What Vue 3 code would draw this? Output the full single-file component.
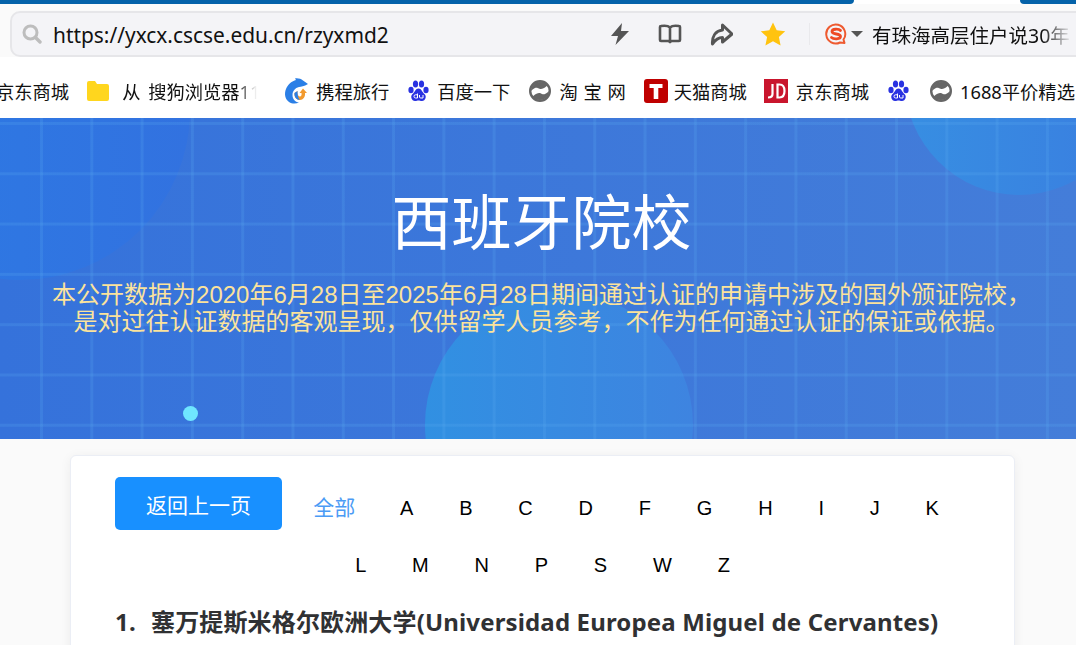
<script setup>
const bookmarks = [
  { icon: 'none', text: '京东商城', cls: 'first' },
  { icon: 'folder', text: '从 搜狗浏览器11', cls: 'fade' },
  { icon: 'ctrip', text: '携程旅行' },
  { icon: 'paw', text: '百度一下' },
  { icon: 'globe', text: '淘 宝 网', cls: 'spaced' },
  { icon: 'tmall', text: '天猫商城', cls: 'tight' },
  { icon: 'jd', text: '京东商城' },
  { icon: 'paw', text: '', cls: 'lone' },
  { icon: 'globe', text: '1688平价精选' },
]

const letters = ['A', 'B', 'C', 'D', 'F', 'G', 'H', 'I', 'J', 'K', 'L', 'M', 'N', 'P', 'S', 'W', 'Z']
</script>

<template>
  <div class="page">
    <!-- 顶部标签条 -->
    <div class="tabstrip">
      <div class="strip-left"></div>
      <div class="strip-gap"></div>
      <div class="strip-right"></div>
    </div>

    <!-- 地址栏 -->
    <div class="addressbar">
      <svg class="search-icon" width="20" height="20" viewBox="0 0 20 20">
        <circle cx="8.5" cy="8.5" r="6.5" fill="none" stroke="#bdbdbd" stroke-width="3" />
        <path d="M13.5 13.5 L18 18" stroke="#bdbdbd" stroke-width="3.4" stroke-linecap="round" />
      </svg>
      <span class="url">https://yxcx.cscse.edu.cn/rzyxmd2</span>
      <div class="tools">
        <svg width="22" height="24" viewBox="0 0 22 24">
          <path d="M13 1 L2 14 H9 L6.500 23 L20 9 H12 Z" fill="#555" />
        </svg>
        <svg width="24" height="24" viewBox="0 0 24 24">
          <path d="M12 5.500 C10 3.500 6 3.500 3 4 Q2 4 2 5 V18 Q2 19 3 19 H10 Q11 19 12 20 Q13 19 14 19 H21 Q22 19 22 18 V5 Q22 4 21 4 C18 3.500 14 3.500 12 5.500 Z M12 5.500 V20" fill="none" stroke="#555" stroke-width="2.600" stroke-linejoin="round" />
        </svg>
        <svg width="24" height="24" viewBox="0 0 24 24">
          <path d="M13.500 3 L23 12 L13.500 20 V15.500 C9 15.500 6.500 17.500 3.500 22 C3 15 6 9 13.500 8 Z" fill="none" stroke="#555" stroke-width="3" stroke-linejoin="round" />
        </svg>
        <svg width="26" height="24" viewBox="0 0 26 24">
          <path d="M13 0.500 L16.700 8.300 L25.200 9.300 L18.900 15 L20.600 23.400 L13 19.200 L5.400 23.400 L7.100 15 L0.800 9.300 L9.300 8.300 Z" fill="#ffc30f" />
        </svg>
      </div>
      <div class="divider"></div>
      <svg class="sogou" width="22" height="24" viewBox="0 0 22 24">
        <path d="M15 20.500 A9.500 9.500 0 1 1 18.500 17.500 L19.500 21 Z" fill="none" stroke="#ee5a30" stroke-width="2" stroke-linejoin="round" />
        <path d="M15.500 8.500 C14 6.800 7 6.500 7 9.500 C7 13 15.500 11 15.500 14.500 C15.500 17.500 8.500 17.300 6.500 15.500" fill="none" stroke="#ee4a24" stroke-width="2.800" stroke-linecap="round" />
      </svg>
      <span class="caret"></span>
      <span class="hot-search">有珠海高层住户说30年</span>
    </div>

    <!-- 收藏栏 -->
    <div class="bookmarks">
      <div v-for="(b, i) in bookmarks" :key="i" class="bookmark" :class="b.cls">
        <svg v-if="b.icon === 'folder'" class="bm-icon" width="22" height="20" viewBox="0 0 22 20">
          <path d="M0 2 Q0 0 2 0 H8 L10 3 H20 Q22 3 22 5 V18 Q22 20 20 20 H2 Q0 20 0 18 Z" fill="#ffd61e" />
        </svg>
        <svg v-else-if="b.icon === 'ctrip'" class="bm-icon" width="24" height="26" viewBox="0 0 24 26">
          <path d="M24 6 L19 2.500 C17 1 14 0 11 0.500 L12 2 C8 3 4 6 2 11 C0 16 1 21 5 24 C8 26 12 26 15 24.500 C11 24 8.500 21 8.500 17 C8.500 13 11 10 15 9 C17 8.500 20 8.500 24 6 Z" fill="#2b7fe6" />
          <path d="M10.500 15 C10 19 12.500 22 16 22 C19 22 21.500 19 21 15 L23 15 L19 10.500 L15.500 15 L17.500 15 C18 17 17 19 15.500 18.500 C14 18 13 16 13.500 13 Z" fill="#f29a2e" />
          <path d="M10.500 15 C10 19 12.500 22 16 22 C14.500 20.500 13.500 18 13.500 13 Z" fill="#2b7fe6" />
        </svg>
        <svg v-else-if="b.icon === 'paw'" class="bm-icon" width="21" height="22" viewBox="0 0 21 22">
          <ellipse cx="3" cy="10" rx="2.600" ry="3.200" fill="#2932e1" />
          <ellipse cx="7.500" cy="4" rx="2.600" ry="3.500" fill="#2932e1" />
          <ellipse cx="13.500" cy="4" rx="2.600" ry="3.500" fill="#2932e1" />
          <ellipse cx="18" cy="10" rx="2.600" ry="3.200" fill="#2932e1" />
          <path d="M10.500 8.500 C7.500 8.500 7 12 4.500 14 C2 16 3.500 21 7 21 C8.500 21 9.500 20.500 10.500 20.500 C11.500 20.500 12.500 21 14 21 C17.500 21 19 16 16.500 14 C14 12 13.500 8.500 10.500 8.500 Z" fill="#2932e1" />
          <path d="M9.500 13.500 V18 H7.500 Q6 18 6 16.300 Q6 14.800 7.500 14.800 H9.500 M11.500 15 V17 Q11.500 18 12.800 18 H15 V15" fill="none" stroke="#fff" stroke-width="1" />
        </svg>
        <svg v-else-if="b.icon === 'globe'" class="bm-icon" width="22" height="22" viewBox="0 0 22 22">
          <circle cx="11" cy="11" r="9.800" fill="none" stroke="#666" stroke-width="2.400" />
          <path d="M2 11 C2 6 6 2 11 2 C14.500 2 17.500 3.500 19 5.500 C17 6 16.500 7.500 15 8 C13.500 8.800 12.500 9 11 9 C9 8 7.500 7.200 6 8 C4 8.800 3 10 2 11 Z" fill="#666" />
          <path d="M20 11 C20 16 16 20 11 20 C7.500 20 4.500 18.500 3 16.500 C5 16 5.500 14.500 7 14 C8.500 13.200 9.500 13 11 13 C13 14 14.500 14.800 16 14 C18 13.200 19 12 20 11 Z" fill="#666" />
        </svg>
        <svg v-else-if="b.icon === 'tmall'" class="bm-icon" width="24" height="24" viewBox="0 0 24 24">
          <rect width="24" height="24" rx="3" fill="#bf0000" />
          <path d="M5.500 5 H18.500 V9 H14.300 V20 H9.700 V9 H5.500 Z" fill="#fff" />
        </svg>
        <svg v-else-if="b.icon === 'jd'" class="bm-icon" width="24" height="24" viewBox="0 0 24 24">
          <rect width="24" height="24" fill="#c9152d" />
          <path d="M8.500 5 V15 Q8.500 18.500 4 18.500 M13.500 5.500 V18.500 H15.500 Q20.500 18.500 20.500 12 Q20.500 5.500 15.500 5.500 Z" fill="none" stroke="#fff" stroke-width="2.200" />
        </svg>
        <span v-if="b.text" class="bm-text">{{ b.text }}</span>
      </div>
    </div>

    <!-- 横幅 -->
    <section class="hero">
      <div class="blob blob-left"></div>
      <div class="blob blob-bottom"></div>
      <div class="blob blob-right"></div>
      <div class="grid-lines"></div>
      <div class="dot"></div>
      <div class="hero-text">
        <h1>西班牙院校</h1>
        <p>本公开数据为2020年6月28日至2025年6月28日期间通过认证的申请中涉及的国外颁证院校，<br />是对过往认证数据的客观呈现，仅供留学人员参考，不作为任何通过认证的保证或依据。</p>
      </div>
    </section>

    <!-- 内容卡片 -->
    <main class="content">
      <div class="card">
        <div class="filter">
          <button class="back-btn">返回上一页</button>
          <span class="letter active">全部</span>
          <span v-for="l in letters" :key="l" class="letter">{{ l }}</span>
        </div>
        <h2 class="school"><span class="num">1.</span>塞万提斯米格尔欧洲大学(Universidad Europea Miguel de Cervantes)</h2>
      </div>
    </main>
  </div>
</template>

<style scoped>
.page {
  width: 1076px;
  height: 645px;
  overflow: hidden;
  background: #fafafa;
  font-family: "Noto Sans", "Noto Sans CJK SC", sans-serif;
}

/* 顶部标签条 */
.tabstrip {
  display: flex;
  height: 4px;
  background: #fff;
}

.strip-left {
  width: 854px;
  background: #0462a9;
  border-bottom-right-radius: 4px;
}

.strip-gap {
  width: 166px;
}

.strip-right {
  flex: 1;
  background: #0462a9;
  border-bottom-left-radius: 4px;
}

/* 地址栏 */
.addressbar {
  display: flex;
  align-items: center;
  height: 46px;
  margin: 7px -10px 0 10px;
  padding-left: 10px;
  background: #f4f4f7;
  border: 2px solid #e6e6e9;
  border-radius: 10px;
  box-sizing: border-box;
}

.search-icon {
  flex-shrink: 0;
}

.url {
  margin-left: 11px;
  padding-top: 2px;
  width: 542px;
  font-size: 20.900px;
  color: #111;
  white-space: nowrap;
}

.tools {
  display: flex;
  align-items: center;
  gap: 27px;
  margin-left: 14px;
}

.divider {
  width: 1px;
  height: 22px;
  margin-left: 23px;
  background: #e9e9ec;
}

.sogou {
  margin-left: 15px;
}

.caret {
  margin-left: 4px;
  border-left: 6px solid transparent;
  border-right: 6px solid transparent;
  border-top: 6px solid #555;
}

.hot-search {
  margin-left: 9px;
  width: 200px;
  font-size: 19.500px;
  color: #111;
  white-space: nowrap;
  overflow: hidden;
  -webkit-mask-image: linear-gradient(90deg, #000 85%, transparent 100%);
  mask-image: linear-gradient(90deg, #000 85%, transparent 100%);
}

/* 收藏栏 */
.bookmarks {
  display: flex;
  align-items: center;
  gap: 19px;
  height: 61px;
  padding-top: 6px;
  box-sizing: border-box;
  background: #fff;
  white-space: nowrap;
  overflow: hidden;
}

.bookmark {
  display: flex;
  align-items: center;
  flex-shrink: 0;
  gap: 8px;
  font-size: 18.300px;
  color: #111;
}

.bookmark.first {
  margin-left: -4px;
  margin-right: -1px;
}

.bookmark.fade {
  gap: 13px;
  margin-right: 8px;
}

.bookmark.fade .bm-text {
  width: 135px;
  overflow: hidden;
  word-spacing: 3px;
  -webkit-mask-image: linear-gradient(90deg, #000 85%, transparent 100%);
  mask-image: linear-gradient(90deg, #000 85%, transparent 100%);
}

.bookmark.spaced .bm-text {
  word-spacing: 1px;
}

.bookmark.spaced {
  margin-right: -1px;
}

.bookmark.tight {
  gap: 6px;
  margin-right: -2px;
}

.bookmark.lone {
  margin-right: 2px;
}

.bm-icon {
  flex-shrink: 0;
}

/* 横幅 */
.hero {
  position: relative;
  height: 321px;
  overflow: hidden;
  background: linear-gradient(90deg, #3572db, #447dd9);
}

.blob {
  position: absolute;
  border-radius: 50%;
}

.blob-left {
  left: -150px;
  top: -178px;
  width: 340px;
  height: 340px;
  background: linear-gradient(90deg, #2c7ae4, #3272e0);
}

.blob-bottom {
  left: 425px;
  top: 173px;
  width: 268px;
  height: 268px;
  background: linear-gradient(90deg, #3190e2, #3e84e0);
}

.blob-right {
  left: 905px;
  top: -151px;
  width: 228px;
  height: 228px;
  background: linear-gradient(90deg, #378ee2, #3a7ee0);
}

.grid-lines {
  position: absolute;
  inset: 0;
  background-image:
    linear-gradient(90deg, rgba(90, 170, 240, 0.22) 3px, transparent 3px),
    linear-gradient(180deg, rgba(90, 170, 240, 0.22) 3px, transparent 3px);
  background-size: 50.300px 50.300px;
  background-position: 40px 4px;
}

.dot {
  position: absolute;
  left: 183px;
  top: 288px;
  width: 15px;
  height: 15px;
  border-radius: 50%;
  background: #6fe6ff;
}

.hero-text {
  position: relative;
  padding-top: 72px;
  text-align: center;
  font-family: "Liberation Sans", "Noto Sans CJK SC", sans-serif;
}

.hero-text h1 {
  margin: 0;
  padding-left: 7px;
  font-size: 60px;
  line-height: 70px;
  font-weight: 400;
  color: #fff;
}

.hero-text p {
  margin: 21px 0 0;
  padding-left: 7px;
  font-size: 24px;
  line-height: 27px;
  color: #fbe39c;
}

/* 内容卡片 */
.content {
  padding: 16px 61px 0 70px;
}

.card {
  padding: 21px 44px 40px;
  background: #fff;
  border: 1px solid #ebeef5;
  border-radius: 6px;
  box-shadow: 0 2px 12px rgba(0, 0, 0, 0.06);
}

.filter {
  padding-top: 2px;
  text-align: center;
  font-family: "Liberation Sans", "Noto Sans CJK SC", sans-serif;
}

.back-btn {
  float: left;
  width: 167px;
  height: 53px;
  margin: -2px 0 0 0;
  padding: 0;
  border: none;
  border-radius: 5px;
  background: #1890ff;
  color: #fff;
  font-family: inherit;
  font-size: 21px;
}

.letter {
  display: inline-block;
  padding: 0 22.900px;
  font-size: 20px;
  line-height: 57px;
  color: #000;
}

.letter.active {
  padding: 0 22px 0 23px;
  font-size: 21px;
  color: #4b9bf5;
}

.school {
  margin: 11px 0 0;
  font-size: 24px;
  line-height: 34px;
  font-weight: 700;
  letter-spacing: 0.150px;
  color: #303133;
  white-space: nowrap;
}

.num {
  display: inline-block;
  width: 36px;
}
</style>
